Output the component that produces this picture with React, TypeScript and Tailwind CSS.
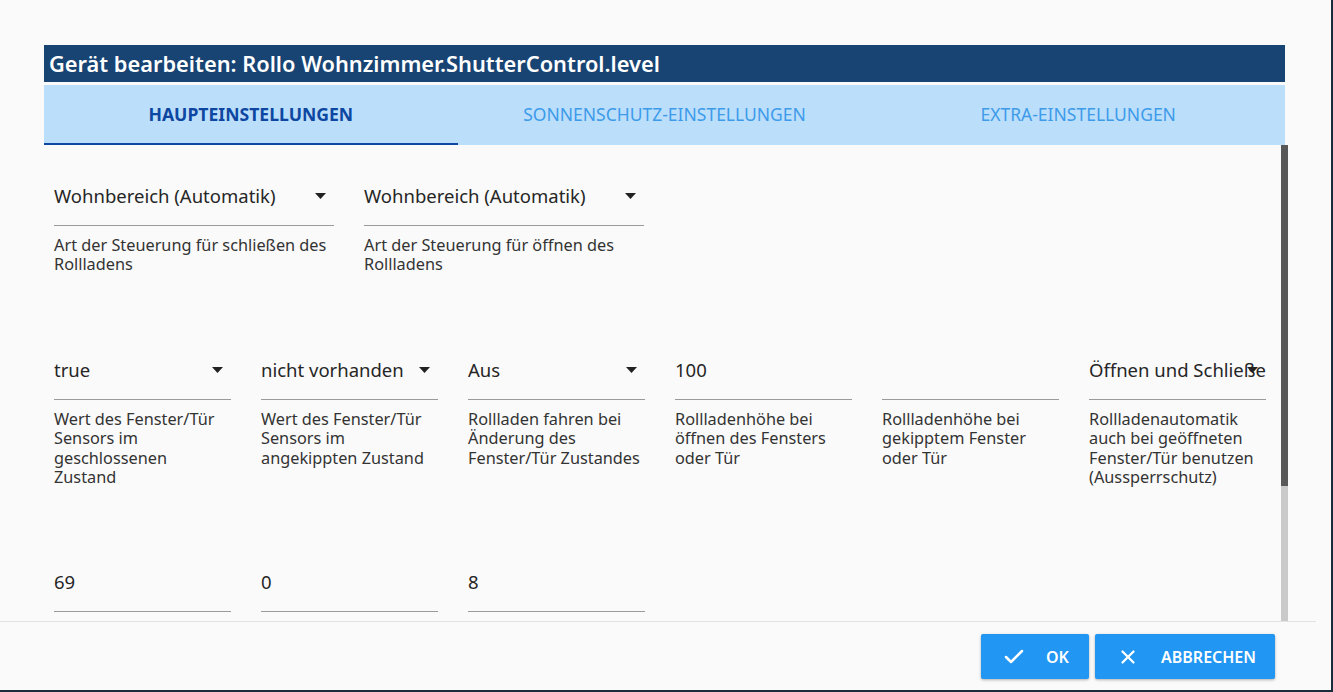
import { Check, X } from 'lucide-react';

type Field = {
  value: string;
  helper?: string;
  select?: boolean;
  wide?: boolean;
};

const rows: Field[][] = [
  [
    { value: 'Wohnbereich (Automatik)', helper: 'Art der Steuerung für schließen des Rollladens', select: true, wide: true },
    { value: 'Wohnbereich (Automatik)', helper: 'Art der Steuerung für öffnen des Rollladens', select: true, wide: true },
  ],
  [
    { value: 'true', helper: 'Wert des Fenster/Tür Sensors im geschlossenen Zustand', select: true },
    { value: 'nicht vorhanden', helper: 'Wert des Fenster/Tür Sensors im angekippten Zustand', select: true },
    { value: 'Aus', helper: 'Rollladen fahren bei Änderung des Fenster/Tür Zustandes', select: true },
    { value: '100', helper: 'Rollladenhöhe bei öffnen des Fensters oder Tür' },
    { value: '', helper: 'Rollladenhöhe bei gekipptem Fenster oder Tür' },
    { value: 'Öffnen und Schließen', helper: 'Rollladenautomatik auch bei geöffneten Fenster/Tür benutzen (Aussperrschutz)', select: true },
  ],
  [{ value: '69' }, { value: '0' }, { value: '8' }],
];

function FormField({ field }: { field: Field }) {
  return (
    <div className={field.wide ? 'w-[280px] shrink-0' : 'w-[177px] shrink-0'}>
      <div className="relative h-[50px] pt-[8px] border-b border-[#9a9a9a] overflow-hidden">
        <div className="text-[18.5px] leading-[24px] text-[#262626] whitespace-nowrap">{field.value}</div>
        {field.select && (
          <svg className="absolute right-[8px] top-[17px]" width="11" height="6" viewBox="0 0 11 6">
            <path d="M0 0h11L5.5 6z" fill="#222" />
          </svg>
        )}
      </div>
      {field.helper && (
        <div className="mt-[10px] text-[16.3px] leading-[19.4px] text-[#333]">{field.helper}</div>
      )}
    </div>
  );
}

export default function App() {
  const tabs = ['HAUPTEINSTELLUNGEN', 'SONNENSCHUTZ-EINSTELLUNGEN', 'EXTRA-EINSTELLUNGEN'];

  return (
    <div
      className="w-[1333px] h-[692px] bg-[#1b2c3a] overflow-hidden"
      style={{ fontFamily: '"Noto Sans", "Open Sans", sans-serif' }}
    >
      <div className="w-[1331px] h-[690px] bg-[#fafafa] flex flex-col">
        <div className="pt-[45px] pl-[44px]">
          <div className="w-[1241px] h-[37px] bg-[#184473] flex items-center pl-[5px]">
            <span className="text-white text-[21.8px] font-semibold leading-none">
              Gerät bearbeiten: Rollo Wohnzimmer.ShutterControl.level
            </span>
          </div>
          <div className="w-[1241px] h-[60px] mt-[3px] bg-[#bbdefb] flex">
            {tabs.map((t, i) => (
              <div
                key={t}
                className={
                  i === 0
                    ? 'flex-1 flex items-center justify-center border-b-2 border-[#0d47a1] text-[#0d47a1] font-bold text-[17.6px]'
                    : 'flex-1 flex items-center justify-center border-b-2 border-transparent text-[#3d9bea] text-[17.5px]'
                }
              >
                {t}
              </div>
            ))}
          </div>
        </div>

        <div className="ml-[44px] w-[1244px] h-[476px] flex overflow-hidden">
          <div className="flex-1 pl-[10px] pt-[31px] flex flex-col gap-[75px] overflow-hidden">
            {rows.map((row, ri) => (
              <div key={ri} className="flex gap-[30px]">
                {row.map((f, fi) => (
                  <FormField key={fi} field={f} />
                ))}
              </div>
            ))}
          </div>
          <div className="w-[7px] flex flex-col">
            <div className="h-[341px] bg-[#585858]" />
            <div className="flex-1 bg-[#c9c9c9]" />
          </div>
        </div>

        <div className="w-[1316px] h-px bg-[#e2e2e2]" />

        <div className="flex justify-end gap-[6px] pt-[12px] pr-[56px]">
          <button className="w-[108px] h-[45px] rounded-[2px] bg-[#2196f3] shadow-[0_1px_3px_rgba(0,0,0,0.3)] text-white flex items-center pl-[21px] gap-[20px] text-[16px] font-semibold">
            <Check size={24} strokeWidth={2.5} />
            <span>OK</span>
          </button>
          <button className="w-[180px] h-[45px] rounded-[2px] bg-[#2196f3] shadow-[0_1px_3px_rgba(0,0,0,0.3)] text-white flex items-center pl-[22px] gap-[22px] text-[16px] font-semibold">
            <X size={22} strokeWidth={2.5} />
            <span>ABBRECHEN</span>
          </button>
        </div>
      </div>
    </div>
  );
}
